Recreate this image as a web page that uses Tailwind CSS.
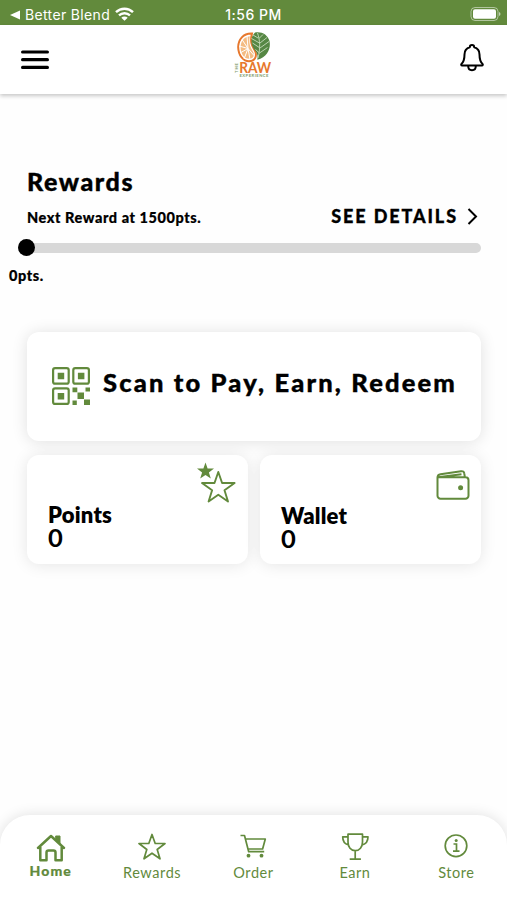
<!DOCTYPE html>
<html lang="en">
<head>
  <meta charset="UTF-8">
  <meta name="viewport" content="width=device-width, initial-scale=1.0">
  <title>The Raw Experience</title>
  <script src="https://cdn.jsdelivr.net/npm/@tailwindcss/browser@4"></script>
</head>
<body class="bg-white">
  <div class="flex flex-col w-[507px] h-[900px] overflow-hidden bg-[#fefefe] font-['Lato',sans-serif] text-black">

    <!-- Status bar -->
    <div class="shrink-0 grid grid-cols-3 items-center h-[25px] bg-[#628a3c] text-white font-['Inter',sans-serif] text-[14px] leading-[25px]">
      <div class="flex items-center pl-[10px] pt-[2px] whitespace-nowrap">
        <svg class="w-[10px] h-[10px] mr-[5px]" viewBox="0 0 10 10" fill="currentColor"><path d="M0 5 10 .5v9z"/></svg>
        <span class="tracking-[0.35px]">Better Blend</span>
        <svg class="w-[19px] h-[14px] ml-[5px] mb-[2px]" viewBox="0 0 19 14" fill="none" stroke="currentColor" stroke-width="2.4">
          <path d="M1 5.2a12.2 12.2 0 0 1 17 0M4 8.4a8 8 0 0 1 11 0"/>
          <path d="M9.500 13.800 6.300 10.700a4.600 4.600 0 0 1 6.400 0z" fill="currentColor" stroke="none"/>
        </svg>
      </div>
      <div class="text-center font-medium tracking-[0.5px] pt-[2px]">1:56 PM</div>
      <div class="flex justify-end pr-[6px]">
        <svg class="w-[31px] h-[14px]" viewBox="0 0 31 14">
          <rect x="1" y=".5" width="27" height="13" rx="4" fill="none" stroke="#fff" stroke-opacity=".5"/>
          <rect x="3" y="2.300" width="23" height="9.400" rx="2" fill="#fff"/>
          <path d="M29 5v4q1.500-.5 1.500-2T29 5z" fill="#fff" fill-opacity=".6"/>
        </svg>
      </div>
    </div>

    <!-- Header -->
    <header class="shrink-0 flex items-start justify-between h-[69px] pl-[21px] pr-[23px] bg-white shadow-[0_2px_4px_rgba(0,0,0,0.22)]">
      <svg class="w-7 h-5 mt-[25px]" viewBox="0 0 28 20" stroke="#000" stroke-width="3.200" stroke-linecap="round"><path d="M1.600 2h24.800M1.600 9.700h24.800M1.600 17.400h24.800"/></svg>

      <svg class="w-10 h-[48px] mt-[6px] ml-[-2px]" viewBox="0 0 40 48">
        <!-- orange slice -->
        <path d="M18 2.500C9.500 2 4 8.500 4.200 16.500S9.500 30.300 15 30.300s8-4.500 6.500-9.300C20 16.500 15 14 18 2.500z" fill="#fff" stroke="#e7782d" stroke-width="2"/>
        <path d="M15.800 5.200C9.500 6 6.700 10.500 6.600 16.500s3.800 11.300 8.200 11.300 5.700-3 4.600-6.300S14 15 15.800 5.200z" fill="#f4bc83"/>
        <path d="M14 17.500 13 5M14 17.500 8 8.500M14 17.500l-9-2.500M14 17.500l-8 4.500M14 17.500 10 28M14 17.500l2 11M14 17.500l6 7" stroke="#fff" stroke-width="1"/>
        <!-- leaf -->
        <path d="M21 1.500c6-1.500 13 2 14.500 8.500 1.500 7-1.500 15.500-12.200 18.800.7-3.600.2-6.300-2.300-9.300C17 14.500 15.500 7 21 1.500z" fill="#568744"/>
        <path d="M23.500 2c2.500 7 3 15 .5 25M24 7l-5-3M25.500 12l-8-4.500M26 17l-7.500-5M25.500 22l-4-3.500M25 7.500l4-4M26 12l7-5.500M26 17l9-6.500M25.500 22l8-5.500" stroke="#c8dbbc" stroke-width=".9" fill="none"/>
        <text x="5.200" y="42" font-family="Lato" font-weight="700" font-size="14.800" textLength="32" lengthAdjust="spacingAndGlyphs" fill="#e7782d">RAW</text>
        <text x="5.500" y="46" font-family="Lato" font-weight="700" font-size="4.200" textLength="29" fill="#829b6c">EXPERIENCE</text>
        <text transform="translate(4.200 42) rotate(-90)" font-family="Lato" font-weight="700" font-size="4.200" textLength="10" fill="#829b6c">THE</text>
      </svg>

      <svg class="w-6 h-[28px] mt-[19px]" viewBox="0 0 24 28" fill="none" stroke="#000" stroke-width="2" stroke-linejoin="round">
        <path d="M9.800 3.300a2.200 2.200 0 0 1 4.400 0c3.600 1 5.300 3.700 5.300 7.200 0 5.500.8 7.300 3 9.400.6.700.3 1.700-.6 1.700H2.100c-.9 0-1.200-1-.6-1.700 2.200-2.100 3-3.900 3-9.400 0-3.500 1.700-6.200 5.300-7.200z"/>
        <path d="M8.200 22c0 2.600 1.600 4.200 3.800 4.200s3.800-1.600 3.800-4.200"/>
      </svg>
    </header>

    <main class="flex-1 pl-[27px] pr-[26px] pt-[75px]">
      <!-- Rewards progress -->
      <h1 class="text-[25px] leading-6 font-black tracking-[1.6px] [-webkit-text-stroke:0.4px]">Rewards</h1>
      <div class="flex items-baseline justify-between h-[21px] mt-[13px] leading-5">
        <p class="text-[14.5px] font-black tracking-[0.56px] [-webkit-text-stroke:0.2px] whitespace-nowrap">Next Reward at 1500pts.</p>
        <a class="flex items-center text-[18px] font-black tracking-[1.9px] [-webkit-text-stroke:0.3px] whitespace-nowrap">
          SEE DETAILS
          <svg class="w-[11px] h-[17px] ml-[9px] mr-[3px]" viewBox="0 0 11 17" fill="none" stroke="#000" stroke-width="2"><path d="m1.500 1 7.500 7.500L1.500 16"/></svg>
        </a>
      </div>
      <div class="flex items-center h-[17px] mt-[12px] -ml-[9px]">
        <div class="relative z-10 w-[17px] h-[17px] shrink-0 rounded-full bg-black"></div>
        <div class="flex-1 h-[10px] -ml-1 rounded-r-full bg-[#d8d8d8]"></div>
      </div>
      <p class="mt-[10px] -ml-[18px] text-[14.5px] leading-5 font-black tracking-[0.6px] [-webkit-text-stroke:0.2px]">0pts.</p>

      <!-- Cards -->
      <section class="mt-[46px] grid grid-cols-2 gap-x-3 gap-y-[14px]">
        <div class="col-span-2 flex h-[109px] pl-[25px] rounded-[12px] bg-white shadow-[0_1px_16px_rgba(0,0,0,0.12)]">
          <svg class="w-[38px] h-[38px] mt-[35px] shrink-0" viewBox="0 0 38 38" fill="#628a3c">
            <g fill="none" stroke="#628a3c" stroke-width="2.200">
              <rect x="1.100" y="1.100" width="15.600" height="15.600" rx="2"/>
              <rect x="21.300" y="1.100" width="15.600" height="15.600" rx="2"/>
              <rect x="1.100" y="21.300" width="15.600" height="15.600" rx="2"/>
            </g>
            <path d="M5.700 5.700h6.500v6.500H5.700zM25.900 5.700h6.500v6.500h-6.500zM5.700 25.900h6.500v6.500H5.700zM20.500 20.500h4.800v4.800h-4.800zM33.500 20.500H38v4h-4.500zM25.500 25.500H32V32h-6.500zM20.500 33.500h4.300V38h-4.300zM32 32.500h6V38h-6z"/>
          </svg>
          <span class="mt-[35px] ml-[13px] text-[25.5px] leading-[30px] font-black tracking-[2.17px] [-webkit-text-stroke:0.4px] whitespace-nowrap">Scan to Pay, Earn, Redeem</span>
        </div>

        <div class="flex justify-between h-[109px] pl-[21px] pr-[11px] rounded-[12px] bg-white shadow-[0_1px_16px_rgba(0,0,0,0.1)]">
          <div class="pt-[49px]">
            <h2 class="text-[22px] leading-[22px] font-extrabold tracking-[0.2px]">Points</h2>
            <p class="text-[25.5px] leading-[23px] font-bold">0</p>
          </div>
          <svg class="w-[40px] h-[42px] mt-[7px]" viewBox="0 0 40 42">
            <path d="M8.500.5 10.600 6.500H17l-5.100 4 1.900 6.100-5.300-3.600-5.300 3.600 1.900-6.100L0 6.500h6.400z" fill="#628a3c"/>
            <path d="M21.300 10 25.100 21H37.600l-10.100 7.200 3.500 11.300-9.700-6.700-9.700 6.700 3.500-11.300L5 21h12.500z" fill="#fff" stroke="#628a3c" stroke-width="1.900" stroke-linejoin="round"/>
          </svg>
        </div>

        <div class="flex justify-between h-[109px] pl-[21px] pr-[11px] rounded-[12px] bg-white shadow-[0_1px_16px_rgba(0,0,0,0.1)]">
          <div class="pt-[50px]">
            <h2 class="text-[22px] leading-[22px] font-extrabold tracking-[0.2px]">Wallet</h2>
            <p class="text-[25.5px] leading-[23px] font-bold">0</p>
          </div>
          <svg class="w-[34px] h-[30px] mt-[15px]" viewBox="0 0 34 30" fill="none" stroke="#628a3c" stroke-width="2">
            <path d="M4 7.300h25.500a3 3 0 0 1 3 3V25.700a3 3 0 0 1-3 3h-25a3 3 0 0 1-3-3V7.500c0-2 1-3 3-3.300L25 1.200c2-.3 3 .5 3.200 2l.7 4M2 7.200 25.500 4.300"/>
            <circle cx="24.600" cy="17.700" r="2.500" fill="#628a3c" stroke="none"/>
          </svg>
        </div>
      </section>
    </main>

    <!-- Bottom navigation -->
    <nav class="shrink-0 grid grid-cols-5 h-[85px] rounded-t-[30px] bg-white shadow-[0_0_14px_rgba(0,0,0,0.12)] text-[#628a3c] text-[14.5px] leading-[18px]">
      <a class="flex flex-col items-center pt-[18px]">
        <svg class="w-[30px] h-[29px]" viewBox="0 0 30 29" fill="none" stroke="currentColor" stroke-width="2.500" stroke-linejoin="round" stroke-linecap="round">
          <path d="M2 15 15 3l13 12M4.300 14v13.200h6.200V19.500q0-2 2-2h5q2 0 2 2v7.700h6.200V14"/>
          <path d="M20 3h4v8l-4-3.500z" fill="currentColor" stroke-width="1"/>
        </svg>
        <span class="font-black tracking-[1.1px] text-[14px] [-webkit-text-stroke:0.2px]">Home</span>
      </a>
      <a class="flex flex-col items-center pt-[18px]">
        <svg class="w-[28px] h-[28px]" viewBox="0 0 28 28" fill="none" stroke="currentColor" stroke-width="1.700" stroke-linejoin="round"><path d="M14 1.500 17.200 10.500H27l-7.800 6 2.800 9.300-8-5.600-8 5.600 2.800-9.300L1 10.500h9.800z"/></svg>
        <span class="mt-[3px] tracking-[0.6px]">Rewards</span>
      </a>
      <a class="flex flex-col items-center pt-[18px]">
        <svg class="w-[28px] h-[28px]" viewBox="0 0 28 28" fill="none" stroke="currentColor" stroke-width="1.700" stroke-linejoin="round">
          <path d="M1.500 2.500h4l4.200 16.200h15.500M6.300 6h20l-2.700 10H9"/>
          <circle cx="9.500" cy="22.700" r="1.900" fill="currentColor" stroke="none"/>
          <circle cx="22.500" cy="22.700" r="1.900" fill="currentColor" stroke="none"/>
        </svg>
        <span class="mt-[3px] tracking-[0.6px]">Order</span>
      </a>
      <a class="flex flex-col items-center pt-[18px]">
        <svg class="w-[28px] h-[28px]" viewBox="0 0 28 28" fill="none" stroke="currentColor" stroke-width="1.700" stroke-linejoin="round">
          <path d="M7 1.200h14.500V9c0 5-3 8.700-7.300 8.700S7 14 7 9zM14.200 17.700V26M8.700 26.200h11.200M7 3.800H1.700c0 4.500 1.800 7.200 5.800 8.200M21.500 3.800H27c0 4.500-1.800 7.200-5.900 8.200"/>
        </svg>
        <span class="mt-[3px] tracking-[0.5px]">Earn</span>
      </a>
      <a class="flex flex-col items-center pt-[18px]">
        <svg class="w-[28px] h-[28px]" viewBox="0 0 28 28" fill="none" stroke="currentColor" stroke-width="1.700">
          <circle cx="14" cy="12.800" r="10.800"/>
          <path d="M11.500 11h3v7M11 18.200h6.500"/>
          <circle cx="14.200" cy="7.500" r="1.500" fill="currentColor" stroke="none"/>
        </svg>
        <span class="mt-[3px] tracking-[0.5px]">Store</span>
      </a>
    </nav>
  </div>
</body>
</html>
